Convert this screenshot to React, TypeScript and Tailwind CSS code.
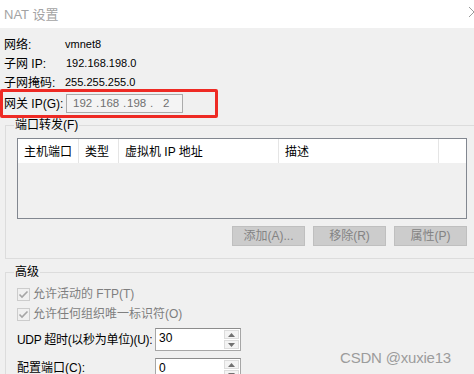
const cols = [
  { label: '主机端口', w: 'w-[61px]' },
  { label: '类型', w: 'w-[40px]' },
  { label: '虚拟机 IP 地址', w: 'w-[160px]' },
  { label: '描述', w: 'w-[160px]' },
]

const CheckRow = ({ text }: { text: string }) => (
  <div className="flex h-[20px] items-center">
    <span className="flex h-[13px] w-[13px] items-center justify-center border border-[#cccccc] bg-[#f0f0f0]">
      <svg width="11" height="11" viewBox="0 0 11 11">
        <polyline points="1.5,5.5 4,8 9.5,2.5" fill="none" stroke="#a5a5a5" strokeWidth="1.6" />
      </svg>
    </span>
    <span className="ml-[3px] text-[#7f7f7f]">{text}</span>
  </div>
)

const SpinBox = ({ value }: { value: string }) => (
  <div className="flex h-[23px] w-[86px] shrink-0 border border-[#a6a6a6] border-t-[#8c8c8c] bg-white">
    <div className="flex-1 pl-[3px] pt-[3px] text-[12px] text-black">{value}</div>
    <div className="flex w-[17px] flex-col gap-[1px] p-[1px]">
      <div className="flex flex-1 items-center justify-center border border-[#dcdcdc] bg-[#f3f3f3]">
        <svg width="7" height="4" viewBox="0 0 7 4"><polygon points="0,4 7,4 3.5,0" fill="#707070" /></svg>
      </div>
      <div className="flex flex-1 items-center justify-center border border-[#dcdcdc] bg-[#f3f3f3]">
        <svg width="7" height="4" viewBox="0 0 7 4"><polygon points="0,0 7,0 3.5,4" fill="#707070" /></svg>
      </div>
    </div>
  </div>
)

const App = () => {
  return (
    <div className="relative h-[374px] w-[474px] overflow-hidden bg-[#f0f0f0] font-['Liberation_Sans','Noto_Sans_CJK_SC',sans-serif] text-[12px] leading-none text-black">
      {/* title bar */}
      <div className="flex h-[28px] items-center justify-between bg-white pl-[4px]">
        <span className="text-[13px] text-[#a3a3a3]">NAT 设置</span>
        <svg width="8" height="12" viewBox="0 0 8 12" className="-mr-[2px] mb-[5px]">
          <polyline points="1,1 6,6 1,11" fill="none" stroke="#9a9a9a" strokeWidth="1" />
        </svg>
      </div>

      <div className="pl-[4px] pt-[7px]">
        <div className="flex h-[19px] items-center">
          <span className="w-[61px]">网络:</span>
          <span className="text-[11px]">vmnet8</span>
        </div>
        <div className="flex h-[19px] items-center">
          <span className="w-[62px]">子网 IP:</span>
          <span className="text-[11px]">192.168.198.0</span>
        </div>
        <div className="flex h-[19px] items-center">
          <span className="w-[61px]">子网掩码:</span>
          <span className="text-[11px]">255.255.255.0</span>
        </div>
      </div>

      {/* gateway, boxed in red */}
      <div className="-mt-[3px] flex h-[29px] w-[218px] items-center rounded-[2px] border-[3px] border-[#ee2a24] pl-[1px]">
        <span className="w-[62px] shrink-0 whitespace-nowrap">网关 IP(G):</span>
        <div className="flex h-[19px] w-[117px] items-center border border-[#ababab] bg-[#f4f4f4] pl-[6px] text-[11.5px] text-[#707070]">
          <span className="w-[23px]">192</span>
          <span className="w-[4px]">.</span>
          <span className="w-[23px]">168</span>
          <span className="w-[4px]">.</span>
          <span className="w-[23px]">198</span>
          <span className="w-[13px]">.</span>
          <span>2</span>
        </div>
      </div>

      {/* port forwarding group */}
      <div className="relative ml-[5px] mt-[7px] w-[480px] border border-[#dcdcdc] px-[11px] pb-[12px] pt-[12px]">
        <span className="absolute -top-[7px] left-[8px] bg-[#f0f0f0] px-[1px]">端口转发(F)</span>
        <div className="flex h-[81px] w-[450px] flex-col border border-[#828790]">
          <div className="flex h-[24px] bg-white">
            {cols.map((c) => (
              <div key={c.label} className={`${c.w} flex items-center border-r border-[#e5e5e5] pl-[6px] pt-[1px]`}>
                {c.label}
              </div>
            ))}
            <div className="flex-1" />
          </div>
        </div>
        <div className="mt-[7px] flex w-[450px] justify-end gap-[8px]">
          {['添加(A)...', '移除(R)', '属性(P)'].map((b) => (
            <button
              key={b}
              className="flex h-[20px] w-[73px] items-center justify-center border border-[#bfbfbf] bg-[#cccccc] text-[#838383]"
            >
              {b}
            </button>
          ))}
        </div>
      </div>

      {/* advanced group */}
      <div className="relative ml-[5px] mt-[13px] h-[140px] w-[480px] border border-[#dcdcdc] pl-[11px] pt-[11px]">
        <span className="absolute -top-[7px] left-[8px] bg-[#f0f0f0] px-[1px]">高级</span>
        <CheckRow text="允许活动的 FTP(T)" />
        <CheckRow text="允许任何组织唯一标识符(O)" />
        <div className="mt-[4px] flex items-center">
          <span className="w-[138px] shrink-0 whitespace-nowrap tracking-[-0.3px]">UDP 超时(以秒为单位)(U):</span>
          <SpinBox value="30" />
        </div>
        <div className="mt-[7px] flex items-start">
          <span className="w-[138px] shrink-0 whitespace-nowrap pt-[4px]">配置端口(C):</span>
          <SpinBox value="0" />
        </div>
      </div>

      {/* watermark */}
      <span className="absolute left-[340px] top-[350px] text-[15px] tracking-[-0.2px] text-[#9c9c9c]">
        CSDN @xuxie13
      </span>
    </div>
  )
}

export default App
